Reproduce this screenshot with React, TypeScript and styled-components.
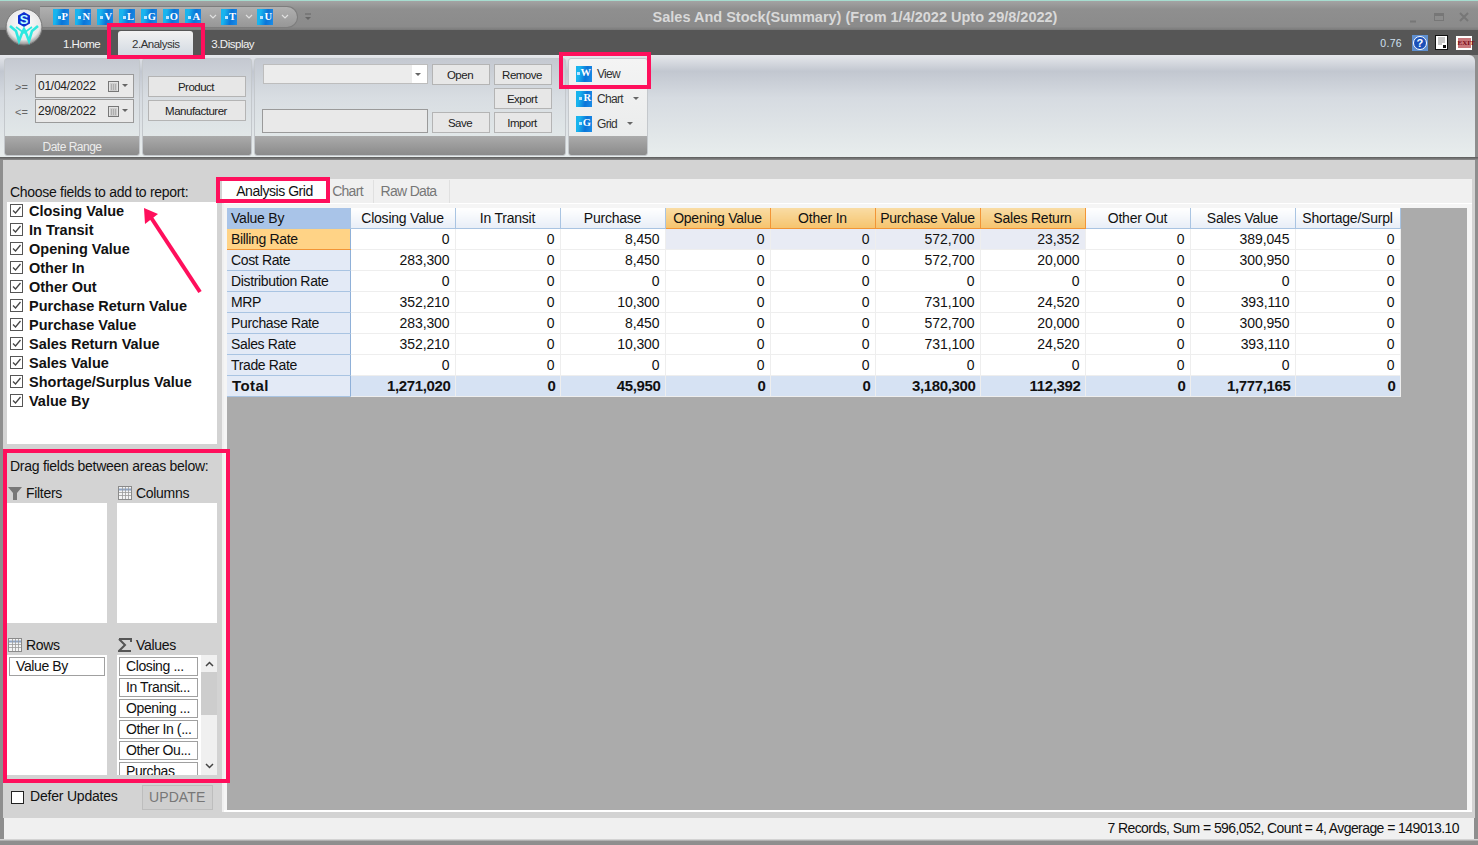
import React, { FC } from 'react';
import styled, { createGlobalStyle } from 'styled-components';

const GlobalStyle = createGlobalStyle`
  html, body {
    margin: 0;
    padding: 0;
    background: #8e8e8e;
    overflow: hidden;
  }
  * { box-sizing: border-box; }
`;

const Window = styled.div`
  position: relative;
  width: 1478px;
  height: 845px;
  display: flex;
  flex-direction: column;
  overflow: hidden;
  background: #8e8e8e;
  color: #111;
  font-family: 'Liberation Sans', Arial, sans-serif;
  font-size: 14px;
`;

/* ---------- title bar ---------- */
const TitleBar = styled.div`
  height: 30px;
  flex: none;
  display: flex;
  align-items: center;
  padding: 1px 0 0 40px;
  border-top: 1px solid #a6dccf;
  background: linear-gradient(#a3a3a3 0, #8f8f8f 28%, #8b8b8b 88%, #7a7a7a 100%);
`;

const QuickBar = styled.div`
  width: 258px;
  height: 22px;
  margin-top: 2px;
  display: flex;
  align-items: center;
  padding-left: 13px;
  border: 1px solid #7d7d7d;
  border-left: none;
  border-radius: 0 11px 11px 0;
  background: linear-gradient(#b0b0b0, #979797);
`;

const BlueIcon = styled.span<{ $gap?: number }>`
  width: 16px;
  height: 16px;
  flex: none;
  margin-right: ${(p) => p.$gap ?? 6}px;
  display: inline-flex;
  align-items: center;
  justify-content: flex-end;
  padding-right: 1px;
  background: linear-gradient(100deg, #18b4ee 0 22%, #0b74d8 60%, #1b8ee8 100%);
  color: #fff;
  font-family: 'Liberation Serif', serif;
  font-weight: bold;
  font-size: 10.5px;
  letter-spacing: 0;
  line-height: 1;
  &::before {
    content: '';
    width: 3px;
    height: 3px;
    margin-right: 1px;
    background: #bfe6ff;
  }
`;

const Caret = styled.span<{ $gap?: number }>`
  flex: none;
  width: 0;
  height: 0;
  margin-left: ${(p) => p.$gap ?? 0}px;
  border-left: 3px solid transparent;
  border-right: 3px solid transparent;
  border-top: 3px solid #666;
`;

const QuickChevron = styled.svg`
  flex: none;
  width: 8px;
  height: 6px;
  margin: 0 4px 0 3px;
`;

const OverflowMark = styled.svg`
  flex: none;
  width: 8px;
  height: 8px;
  margin: 2px 0 0 6px;
`;

const WindowTitle = styled.div`
  flex: 1;
  text-align: center;
  padding: 2px 2px 0 0;
  color: #d9d9d9;
  font-weight: bold;
  font-size: 14.5px;
  white-space: nowrap;
`;

const WindowButtons = styled.div`
  width: 78px;
  flex: none;
  display: flex;
  justify-content: space-between;
  padding: 0 9px 0 8px;
  margin-top: 1px;
`;

/* ---------- tab strip ---------- */
const TabStrip = styled.div`
  height: 25px;
  flex: none;
  display: flex;
  align-items: flex-end;
  padding-left: 63px;
  background: #565656;
  color: #f2f2f2;
  font-size: 11.5px;
  letter-spacing: -0.5px;
`;

const RibbonTab = styled.div<{ $active?: boolean }>`
  height: 24px;
  display: flex;
  align-items: center;
  justify-content: center;
  margin-right: 18px;
  padding: 1px 0 0;
  width: ${(p) => (p.$active ? '75px' : 'auto')};
  border-radius: 3px 3px 0 0;
  color: ${(p) => (p.$active ? '#333' : '#f2f2f2')};
  background: ${(p) => (p.$active ? 'linear-gradient(#f2f2f2, #d3dae2)' : 'transparent')};
`;

const StripRight = styled.div`
  margin-left: auto;
  height: 25px;
  display: flex;
  align-items: center;
  gap: 7px;
  padding-right: 6px;
  color: #cfe0f0;
  font-size: 10.5px;
  letter-spacing: 0.3px;
`;

const VersionText = styled.span`
  margin-right: 3px;
`;

const HelpIcon = styled.span`
  width: 16px;
  height: 16px;
  display: inline-flex;
  align-items: center;
  justify-content: center;
  background: #5f8fd0;
  & > span {
    width: 14px;
    height: 14px;
    border-radius: 50%;
    border: 1px solid #fff;
    background: #1a4fb8;
    color: #fff;
    font-size: 11px;
    font-weight: bold;
    line-height: 12px;
    text-align: center;
  }
`;

const ExitIcon = styled.span`
  width: 16px;
  height: 14px;
  background: #fff;
  display: inline-flex;
  align-items: center;
  justify-content: center;
  & > span {
    width: 13px;
    height: 10px;
    background: #c9777b;
    color: #7a0a14;
    font-family: 'Liberation Serif', serif;
    font-size: 7px;
    font-weight: bold;
    line-height: 10px;
    letter-spacing: 0;
    text-align: center;
  }
`;

/* ---------- ribbon ---------- */
const Ribbon = styled.div`
  height: 102px;
  flex: none;
  display: flex;
  gap: 2px;
  padding: 3px 0 1px 4px;
  margin: 0 3px 0 0;
  border-radius: 0 6px 0 0;
  background: linear-gradient(#e6e8ec 0, #c2c7d0 16%, #d6dbe1 42%, #e8eded 100%);
  font-size: 12px;
  letter-spacing: -0.7px;
`;

const RibbonGroup = styled.div<{ $width: number; $light?: boolean }>`
  width: ${(p) => p.$width}px;
  display: flex;
  flex-direction: column;
  border: 1px solid #c4c8cc;
  border-radius: 3px;
  overflow: hidden;
  background: ${(p) =>
    p.$light ? 'linear-gradient(#f4f4f4, #e8eaea)' : 'linear-gradient(#c5c9d1 0, #d8dde2 40%, #e6eceb 100%)'};
`;

const GroupBody = styled.div`
  flex: 1;
  min-height: 0;
`;

const GroupFooter = styled.div`
  height: 19px;
  flex: none;
  padding-top: 2px;
  text-align: center;
  line-height: 19px;
  color: #ececec;
  letter-spacing: -0.5px;
  background: linear-gradient(#ababab, #8b8b8b);
`;

const DateBody = styled(GroupBody)`
  padding: 15px 0 0 10px;
  display: flex;
  flex-direction: column;
  gap: 1px;
`;

const DateRow = styled.div`
  display: flex;
  align-items: center;
  height: 24px;
`;

const DateSign = styled.span`
  width: 20px;
  color: #666;
  font-size: 11px;
  letter-spacing: 0;
  padding-top: 2px;
`;

const DateField = styled.div`
  width: 99px;
  height: 24px;
  display: flex;
  align-items: center;
  padding: 0 5px 1px 2px;
  border: 1px solid #9a9a9a;
  background: #e9e9e9;
  color: #222;
  letter-spacing: -0.25px;
`;

const CalendarIcon = styled.svg`
  width: 11px;
  height: 11px;
  margin: 2px 0 0 auto;
  flex: none;
`;

const RibbonButton = styled.button<{ $width?: number }>`
  width: ${(p) => p.$width ?? 58}px;
  height: 21px;
  padding: 0 2px 0 0;
  border: 1px solid #b4b4b4;
  background: #e7e7e7;
  color: #222;
  font-family: inherit;
  font-size: 11.5px;
  letter-spacing: -0.5px;
`;

const FilterBody = styled(GroupBody)`
  padding: 17px 0 0 5px;
  display: flex;
  flex-direction: column;
  gap: 3px;
`;

const FileBody = styled(GroupBody)`
  padding: 5px 0 0 7px;
  display: grid;
  grid-template-columns: 166px 58px 58px;
  grid-template-rows: 21px 21px 21px;
  column-gap: 4px;
  row-gap: 3px;
`;

const ComboBox = styled.div`
  grid-column: 1;
  grid-row: 1;
  height: 20px;
  margin-left: 1px;
  display: flex;
  align-items: center;
  justify-content: flex-end;
  padding-right: 6px;
  border: 1px solid #bdbdbd;
  background: linear-gradient(to right, #ececec 0 calc(100% - 15px), #fff calc(100% - 15px));
`;

const NameBox = styled.div`
  grid-column: 1;
  grid-row: 3;
  height: 24px;
  align-self: end;
  border: 1px solid #9a9a9a;
  background: #e9e9e9;
`;

const CellButton = styled(RibbonButton)<{ $col: number; $row: number }>`
  grid-column: ${(p) => p.$col};
  grid-row: ${(p) => p.$row};
`;

const ViewBody = styled(GroupBody)`
  padding: 4px 0 0 7px;
  display: flex;
  flex-direction: column;
  gap: 4px;
`;

const ViewItem = styled.div`
  height: 21px;
  display: flex;
  align-items: center;
  color: #333;
`;

const ViewLabel = styled.span`
  margin-left: -1px;
`;

const RibbonShadow = styled.div`
  height: 3px;
  flex: none;
  background: linear-gradient(#5b5b5b, #8d8d8d);
`;

/* ---------- body ---------- */
const Main = styled.div`
  flex: 1;
  min-height: 0;
  display: flex;
  margin: 0 3px;
  background: #d3d3d3;
`;

const FieldPanel = styled.div`
  width: 219px;
  flex: none;
  padding: 24px 0 0 4px;
`;

const PanelCaption = styled.div`
  height: 18px;
  line-height: 16px;
  padding-left: 3px;
  letter-spacing: -0.3px;
  white-space: nowrap;
`;

const FieldList = styled.div`
  width: 210px;
  height: 242px;
  background: #fff;
`;

const FieldRow = styled.label`
  height: 19px;
  display: flex;
  align-items: center;
  padding: 0 0 2px 3px;
  font-weight: bold;
  font-size: 14.5px;
  white-space: nowrap;
`;

const CheckBox = styled.span<{ $checked?: boolean }>`
  width: 13px;
  height: 13px;
  flex: none;
  margin-right: 6px;
  display: inline-flex;
  border: 1px solid ${(p) => (p.$checked ? '#555' : '#222')};
  background: #fff;
`;

const DragCaption = styled(PanelCaption)`
  margin-top: 12px;
  height: 20px;
  line-height: 20px;
  letter-spacing: -0.27px;
`;

const AreaGrid = styled.div`
  width: 210px;
  margin-top: 7px;
  display: grid;
  grid-template-columns: 100px 100px;
  column-gap: 10px;
  row-gap: 12px;
`;

const AreaCell = styled.div``;

const AreaLabel = styled.div`
  height: 20px;
  display: flex;
  align-items: center;
  gap: 4px;
  padding-left: 1px;
  letter-spacing: -0.3px;
`;

const AreaIcon = styled.svg`
  width: 14px;
  height: 14px;
  flex: none;
`;

const AreaBox = styled.div`
  position: relative;
  height: 120px;
  overflow: hidden;
  background: #fff;
  padding: 2px;
`;

const AreaItem = styled.div<{ $width: number }>`
  width: ${(p) => p.$width}px;
  height: 19px;
  margin-bottom: 2px;
  padding-left: 6px;
  border: 1px solid #a0a0a0;
  line-height: 17px;
  letter-spacing: -0.4px;
  white-space: nowrap;
  overflow: hidden;
  background: #fff;
`;

const ScrollTrack = styled.div`
  position: absolute;
  right: 0;
  top: 0;
  bottom: 0;
  width: 16px;
  display: flex;
  flex-direction: column;
  align-items: center;
  background: #f0f0f0;
`;

const ScrollArrow = styled.svg`
  width: 9px;
  height: 6px;
  flex: none;
  margin: 6px 0;
`;

const ScrollThumb = styled.div`
  width: 16px;
  height: 43px;
  margin-bottom: auto;
  margin-top: -1px;
  background: #cdcdcd;
`;

const DeferRow = styled.div`
  height: 26px;
  margin-top: 9px;
  display: flex;
  align-items: center;
  padding-left: 4px;
`;

const DeferText = styled.span`
  letter-spacing: -0.2px;
  margin-bottom: 2px;
`;

const UpdateButton = styled.button`
  width: 71px;
  height: 25px;
  margin-left: 24px;
  padding: 0;
  border: 1px solid #bdbdbd;
  background: #cfcfcf;
  color: #777;
  font: inherit;
  letter-spacing: 0.1px;
`;

const ReportPane = styled.div`
  flex: 1;
  min-width: 0;
  display: flex;
  flex-direction: column;
  margin: 19px 3px 6px 0;
  background: #f0f0f0;
`;

const ReportTabs = styled.div`
  height: 24px;
  flex: none;
  display: flex;
  align-items: flex-end;
`;

const ReportTab = styled.div<{ $active?: boolean; $width: number }>`
  width: ${(p) => p.$width}px;
  height: 23px;
  padding-right: ${(p) => (p.$active ? 0 : 6)}px;
  text-align: center;
  line-height: 23px;
  background: ${(p) => (p.$active ? '#fff' : 'transparent')};
  color: ${(p) => (p.$active ? '#111' : '#777')};
  border-right: 1px solid #e0e0e0;
  letter-spacing: ${(p) => (p.$active ? -0.45 : -0.7)}px;
`;

const GridFrame = styled.div`
  flex: 1;
  min-height: 0;
  margin-left: 2px;
  padding: 4px 5px 0 3px;
  border-top: 1px solid #fff;
  border-bottom: 2px solid #fff;
  background: #f5f5f5;
  display: flex;
`;

const GridArea = styled.div`
  flex: 1;
  background: #ababab;
`;

const PivotTable = styled.table`
  width: 1173px;
  table-layout: fixed;
  border-collapse: collapse;
  border-bottom: 1px solid #777;
`;

const HeadCell = styled.th<{ $hot?: boolean; $corner?: boolean }>`
  height: 20px;
  padding: 0 3px;
  overflow: hidden;
  white-space: nowrap;
  text-align: center;
  font-weight: normal;
  letter-spacing: -0.22px;
  border-right: 1px solid ${(p) => (p.$hot ? '#f29536' : '#a9c4e2')};
  border-bottom: 1px solid ${(p) => (p.$hot ? '#f29536' : '#a9c4e2')};
  background: ${(p) =>
    p.$corner ? '#a9c4e8' : p.$hot ? 'linear-gradient(#f9dca4, #f6c46e)' : 'linear-gradient(#fff, #e8eef7)'};
  &:first-child {
    text-align: left;
    padding-left: 4px;
  }
`;

const RowHead = styled.td<{ $hot?: boolean; $total?: boolean }>`
  height: 21px;
  padding: 0 ${(p) => (p.$total ? 5 : 4)}px;
  white-space: nowrap;
  font-weight: ${(p) => (p.$total ? 'bold' : 'normal')};
  font-size: ${(p) => (p.$total ? '15px' : '14px')};
  letter-spacing: ${(p) => (p.$total ? 0.4 : -0.35)}px;
  border-right: 1px solid #8fb0d8;
  border-bottom: 1px solid ${(p) => (p.$hot ? '#f29536' : '#a9c4e2')};
  background: ${(p) => (p.$hot ? '#ffd386' : '#e3eaf6')};
`;

const ValueCell = styled.td<{ $selected?: boolean; $total?: boolean }>`
  height: 21px;
  padding: 0 ${(p) => (p.$total ? 4 : 5)}px 0 0;
  text-align: right;
  white-space: nowrap;
  font-weight: ${(p) => (p.$total ? 'bold' : 'normal')};
  font-size: ${(p) => (p.$total ? '15px' : '14px')};
  letter-spacing: ${(p) => (p.$total ? '-0.35px' : '-0.1px')};
  border-right: 1px solid #eee;
  border-bottom: 1px solid #eee;
  background: ${(p) => (p.$total ? '#d6e2f3' : p.$selected ? '#e8ebf4' : '#fff')};
`;

const StatusBar = styled.div`
  height: 21px;
  flex: none;
  margin: 0 4px;
  padding: 1px 15px 0 0;
  text-align: right;
  line-height: 19px;
  background: #f0f0f0;
  letter-spacing: -0.58px;
`;

const BottomEdge = styled.div`
  height: 6px;
  flex: none;
  background: linear-gradient(#d3d3d3 0 1px, #8e8e8e 2px);
`;

/* ---------- things lying over the page ---------- */
const Orb = styled.svg`
  position: absolute;
  left: 5px;
  top: 7px;
  width: 40px;
  height: 42px;
`;

const Mark = styled.div`
  position: absolute;
  border: 4px solid #ff0f5c;
  pointer-events: none;
`;

const AnalysisMark = styled(Mark)`
  left: 107px;
  top: 23px;
  width: 98px;
  height: 36px;
`;

const ViewMark = styled(Mark)`
  left: 559px;
  top: 52px;
  width: 92px;
  height: 37px;
`;

const GridTabMark = styled(Mark)`
  left: 216px;
  top: 177px;
  width: 114px;
  height: 26px;
`;

const DragMark = styled(Mark)`
  left: 3px;
  top: 449px;
  width: 227px;
  height: 334px;
`;

const Pointer = styled.svg`
  position: absolute;
  left: 140px;
  top: 204px;
  width: 66px;
  height: 92px;
`;

const columns = [
  'Closing Value',
  'In Transit',
  'Purchase',
  'Opening Value',
  'Other In',
  'Purchase Value',
  'Sales Return',
  'Other Out',
  'Sales Value',
  'Shortage/Surpl',
];
const hotColumns = [3, 4, 5, 6];

const rows: [string, string[]][] = [
  ['Billing Rate', ['0', '0', '8,450', '0', '0', '572,700', '23,352', '0', '389,045', '0']],
  ['Cost Rate', ['283,300', '0', '8,450', '0', '0', '572,700', '20,000', '0', '300,950', '0']],
  ['Distribution Rate', ['0', '0', '0', '0', '0', '0', '0', '0', '0', '0']],
  ['MRP', ['352,210', '0', '10,300', '0', '0', '731,100', '24,520', '0', '393,110', '0']],
  ['Purchase Rate', ['283,300', '0', '8,450', '0', '0', '572,700', '20,000', '0', '300,950', '0']],
  ['Sales Rate', ['352,210', '0', '10,300', '0', '0', '731,100', '24,520', '0', '393,110', '0']],
  ['Trade Rate', ['0', '0', '0', '0', '0', '0', '0', '0', '0', '0']],
];
const totals = ['1,271,020', '0', '45,950', '0', '0', '3,180,300', '112,392', '0', '1,777,165', '0'];

const fields = [
  'Closing Value',
  'In Transit',
  'Opening Value',
  'Other In',
  'Other Out',
  'Purchase Return Value',
  'Purchase Value',
  'Sales Return Value',
  'Sales Value',
  'Shortage/Surplus Value',
  'Value By',
];

const valueItems = ['Closing ...', 'In Transit...', 'Opening ...', 'Other In (...', 'Other Ou...', 'Purchas'];

const Tick = () => (
  <svg width="11" height="11" viewBox="0 0 11 11">
    <path d="M2 5.5 L4.5 8 L9.5 2" fill="none" stroke="#444" strokeWidth="1.3" />
  </svg>
);

const Calendar = () => (
  <CalendarIcon viewBox="0 0 11 11">
    <rect x="0.5" y="0.5" width="10" height="10" fill="#e4e4e4" stroke="#777" />
    <path d="M2 3h7M2 5h7M2 7h7M2 9h7M3.5 3v6M5.5 3v6M7.5 3v6" stroke="#999" strokeWidth="0.6" />
  </CalendarIcon>
);

const GridGlyph = () => (
  <AreaIcon viewBox="0 0 14 14">
    <rect x="0.5" y="0.5" width="13" height="13" fill="#f4f4f4" stroke="#8a8a8a" />
    <path d="M1 3.5h12" stroke="#8ea4c4" strokeWidth="2" />
    <path d="M1 6.5h12M1 9.5h12M4.5 1v12M7.5 1v12M10.5 1v12" stroke="#9a9a9a" strokeWidth="0.8" />
  </AreaIcon>
);

const Chevron = () => (
  <QuickChevron viewBox="0 0 8 6">
    <path d="M1 1 L4 4 L7 1" fill="none" stroke="#e0e0e0" strokeWidth="1.2" />
  </QuickChevron>
);

const App: FC = () => {
  return (
    <>
      <GlobalStyle />
      <Window>
        <TitleBar>
          <QuickBar>
            <BlueIcon>P</BlueIcon>
            <BlueIcon>N</BlueIcon>
            <BlueIcon>V</BlueIcon>
            <BlueIcon>L</BlueIcon>
            <BlueIcon>G</BlueIcon>
            <BlueIcon>O</BlueIcon>
            <BlueIcon $gap={5}>A</BlueIcon>
            <Chevron />
            <BlueIcon $gap={5}>T</BlueIcon>
            <Chevron />
            <BlueIcon $gap={5}>U</BlueIcon>
            <Chevron />
          </QuickBar>
          <OverflowMark viewBox="0 0 8 8">
            <path d="M1 1h6" stroke="#666" strokeWidth="1" />
            <path d="M1 4h6L4 7z" fill="#666" />
          </OverflowMark>
          <WindowTitle>Sales And Stock(Summary) (From 1/4/2022 Upto 29/8/2022)</WindowTitle>
          <WindowButtons>
            <svg width="10" height="12" viewBox="0 0 10 12">
              <path d="M2 10.5h6" stroke="#777" strokeWidth="2" />
            </svg>
            <svg width="10" height="12" viewBox="0 0 10 12">
              <rect x="0.5" y="2.5" width="9" height="7" fill="none" stroke="#777" />
              <path d="M0 4h10" stroke="#777" strokeWidth="2" />
            </svg>
            <svg width="10" height="12" viewBox="0 0 10 12">
              <path d="M1 2l8 8M9 2l-8 8" stroke="#777" strokeWidth="2" />
            </svg>
          </WindowButtons>
        </TitleBar>

        <TabStrip>
          <RibbonTab>1.Home</RibbonTab>
          <RibbonTab $active>2.Analysis</RibbonTab>
          <RibbonTab>3.Display</RibbonTab>
          <StripRight>
            <VersionText>0.76</VersionText>
            <HelpIcon>
              <span>?</span>
            </HelpIcon>
            <svg width="14" height="15" viewBox="0 0 14 15">
              <rect x="0.5" y="0.5" width="12" height="14" fill="#fff" stroke="#111" />
              <path d="M3 3h7M3 5h7M3 7h7M3 9h4" stroke="#777" strokeWidth="0.8" />
              <rect x="8" y="10" width="3" height="3" fill="#111" />
            </svg>
            <ExitIcon>
              <span>EXIT</span>
            </ExitIcon>
          </StripRight>
        </TabStrip>

        <Ribbon>
          <RibbonGroup $width={136}>
            <DateBody>
              <DateRow>
                <DateSign>&gt;=</DateSign>
                <DateField>
                  01/04/2022
                  <Calendar />
                  <Caret $gap={3} />
                </DateField>
              </DateRow>
              <DateRow>
                <DateSign>&lt;=</DateSign>
                <DateField>
                  29/08/2022
                  <Calendar />
                  <Caret $gap={3} />
                </DateField>
              </DateRow>
            </DateBody>
            <GroupFooter>Date Range</GroupFooter>
          </RibbonGroup>

          <RibbonGroup $width={110}>
            <FilterBody>
              <RibbonButton $width={98}>Product</RibbonButton>
              <RibbonButton $width={98}>Manufacturer</RibbonButton>
            </FilterBody>
            <GroupFooter />
          </RibbonGroup>

          <RibbonGroup $width={312}>
            <FileBody>
              <ComboBox>
                <Caret />
              </ComboBox>
              <NameBox />
              <CellButton $col={2} $row={1}>Open</CellButton>
              <CellButton $col={3} $row={1}>Remove</CellButton>
              <CellButton $col={3} $row={2}>Export</CellButton>
              <CellButton $col={2} $row={3}>Save</CellButton>
              <CellButton $col={3} $row={3}>Import</CellButton>
            </FileBody>
            <GroupFooter />
          </RibbonGroup>

          <RibbonGroup $width={80} $light>
            <ViewBody>
              <ViewItem>
                <BlueIcon>W</BlueIcon>
                <ViewLabel>View</ViewLabel>
              </ViewItem>
              <ViewItem>
                <BlueIcon>R</BlueIcon>
                <ViewLabel>Chart</ViewLabel>
                <Caret $gap={10} />
              </ViewItem>
              <ViewItem>
                <BlueIcon>G</BlueIcon>
                <ViewLabel>Grid</ViewLabel>
                <Caret $gap={10} />
              </ViewItem>
            </ViewBody>
            <GroupFooter />
          </RibbonGroup>
        </Ribbon>
        <RibbonShadow />

        <Main>
          <FieldPanel>
            <PanelCaption>Choose fields to add to report:</PanelCaption>
            <FieldList>
              {fields.map((f) => (
                <FieldRow key={f}>
                  <CheckBox $checked>
                    <Tick />
                  </CheckBox>
                  {f}
                </FieldRow>
              ))}
            </FieldList>

            <DragCaption>Drag fields between areas below:</DragCaption>
            <AreaGrid>
              <AreaCell>
                <AreaLabel>
                  <AreaIcon viewBox="0 0 14 14">
                    <path d="M0 1h14L9 7v7H5V7z" fill="#777" />
                  </AreaIcon>
                  Filters
                </AreaLabel>
                <AreaBox />
              </AreaCell>
              <AreaCell>
                <AreaLabel>
                  <GridGlyph />
                  Columns
                </AreaLabel>
                <AreaBox />
              </AreaCell>
              <AreaCell>
                <AreaLabel>
                  <GridGlyph />
                  Rows
                </AreaLabel>
                <AreaBox>
                  <AreaItem $width={96}>Value By</AreaItem>
                </AreaBox>
              </AreaCell>
              <AreaCell>
                <AreaLabel>
                  <AreaIcon viewBox="0 0 14 14">
                    <path d="M1 1h12v3M13 13H1l6-6-6-6" fill="none" stroke="#555" strokeWidth="2" />
                  </AreaIcon>
                  Values
                </AreaLabel>
                <AreaBox>
                  {valueItems.map((v) => (
                    <AreaItem key={v} $width={79}>
                      {v}
                    </AreaItem>
                  ))}
                  <ScrollTrack>
                    <ScrollArrow viewBox="0 0 9 6">
                      <path d="M1 5 L4.5 1.5 L8 5" fill="none" stroke="#444" strokeWidth="1.5" />
                    </ScrollArrow>
                    <ScrollThumb />
                    <ScrollArrow viewBox="0 0 9 6">
                      <path d="M1 1 L4.5 4.5 L8 1" fill="none" stroke="#444" strokeWidth="1.5" />
                    </ScrollArrow>
                  </ScrollTrack>
                </AreaBox>
              </AreaCell>
            </AreaGrid>
            <DeferRow>
              <CheckBox />
              <DeferText>Defer Updates</DeferText>
              <UpdateButton disabled>UPDATE</UpdateButton>
            </DeferRow>
          </FieldPanel>

          <ReportPane>
            <ReportTabs>
              <ReportTab $active $width={106}>Analysis Grid</ReportTab>
              <ReportTab $width={46}>Chart</ReportTab>
              <ReportTab $width={76}>Raw Data</ReportTab>
            </ReportTabs>
            <GridFrame>
              <GridArea>
                <PivotTable>
                  <colgroup>
                    <col width="123" />
                    {columns.map((c) => (
                      <col key={c} width="105" />
                    ))}
                  </colgroup>
                  <thead>
                    <tr>
                      <HeadCell $corner>Value By</HeadCell>
                      {columns.map((c, i) => (
                        <HeadCell key={c} $hot={hotColumns.includes(i)}>
                          {c}
                        </HeadCell>
                      ))}
                    </tr>
                  </thead>
                  <tbody>
                    {rows.map(([name, vals], r) => (
                      <tr key={name}>
                        <RowHead $hot={r === 0}>{name}</RowHead>
                        {vals.map((v, i) => (
                          <ValueCell key={i} $selected={r === 0 && hotColumns.includes(i)}>
                            {v}
                          </ValueCell>
                        ))}
                      </tr>
                    ))}
                    <tr>
                      <RowHead $total>Total</RowHead>
                      {totals.map((v, i) => (
                        <ValueCell key={i} $total>
                          {v}
                        </ValueCell>
                      ))}
                    </tr>
                  </tbody>
                </PivotTable>
              </GridArea>
            </GridFrame>
          </ReportPane>
        </Main>
        <StatusBar>7 Records, Sum = 596,052, Count = 4, Avgerage = 149013.10</StatusBar>
        <BottomEdge />

        <Orb viewBox="0 0 40 42">
          <defs>
            <radialGradient id="orb" cx="50%" cy="40%" r="60%">
              <stop offset="0%" stopColor="#ffffff" />
              <stop offset="75%" stopColor="#e8e8e8" />
              <stop offset="100%" stopColor="#8a8a8a" />
            </radialGradient>
          </defs>
          <circle cx="19" cy="20" r="18" fill="url(#orb)" stroke="#777" />
          <path d="M19 5l6 3.5v8L19 20l-6-3.5v-8z" fill="#0d2fd0" />
          <text x="19" y="17" textAnchor="middle" fontSize="13" fontWeight="bold" fill="#bff" fontFamily="Liberation Sans">S</text>
          <path d="M5 19l6 5 3 10 3-8 2-4 2 4 3 8 3-10 6-5" fill="none" stroke="#2fe8e0" strokeWidth="2.6" />
          <path d="M11 20l8 6 8-6" fill="none" stroke="#2fe8e0" strokeWidth="1.6" />
        </Orb>
        <AnalysisMark />
        <ViewMark />
        <GridTabMark />
        <DragMark />
        <Pointer viewBox="0 0 66 92">
          <path d="M60 88 L10 12" stroke="#ff0f5c" strokeWidth="4" fill="none" />
          <path d="M4 4 L5 20 L18 10 Z" fill="#ff0f5c" />
        </Pointer>
      </Window>
    </>
  );
};

export default App;
